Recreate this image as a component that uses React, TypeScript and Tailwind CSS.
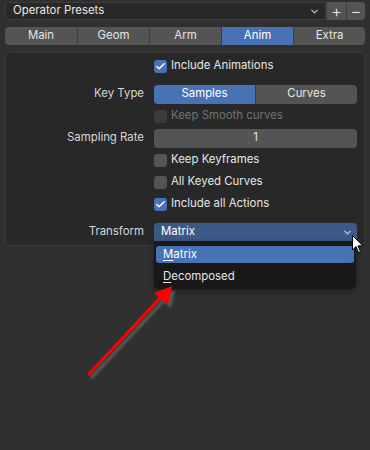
import { Check, ChevronDown } from 'lucide-react';

const font = { fontFamily: 'Inter, "Noto Sans", sans-serif' };

function CheckBox({ checked, disabled }: { checked?: boolean; disabled?: boolean }) {
  return (
    <span
      className={`flex h-[13px] w-[13px] items-center justify-center rounded-[3px] ${
        checked ? 'bg-[#4772b3]' : disabled ? 'bg-[#3a3a3a]' : 'bg-[#545454]'
      }`}
    >
      {checked && <Check size={11} strokeWidth={3.2} className="text-white" />}
    </span>
  );
}

function CheckRow({ label, checked, disabled }: { label: string; checked?: boolean; disabled?: boolean }) {
  return (
    <div className="flex h-[22px] items-center">
      <div className="w-[148px]" />
      <CheckBox checked={checked} disabled={disabled} />
      <span className={`ml-[4px] text-[11.4px] ${disabled ? 'text-[#737373]' : 'text-[#e6e6e6]'}`}>{label}</span>
    </div>
  );
}

function FieldRow({ label, children, className = '' }: { label: string; children: React.ReactNode; className?: string }) {
  return (
    <div className={`flex h-[22px] items-center ${className}`}>
      <div className="w-[138px] text-right text-[11.4px] text-[#d6d6d6]">{label}</div>
      <div className="ml-[10px] w-[203px]">{children}</div>
    </div>
  );
}

export default function App() {
  const tabs = ['Main', 'Geom', 'Arm', 'Anim', 'Extra'];

  return (
    <div className="relative h-[450px] w-[370px] overflow-hidden bg-[#303030] text-[#e6e6e6]" style={font}>
      {/* presets row */}
      <div className="mx-[5px] mt-[2px] flex h-[18px]">
        <div className="flex flex-1 items-center justify-between rounded-l-[4px] border border-[#3d3d3d] bg-[#282828] pl-[7px] pr-[5px] text-[11.4px]">
          <span>Operator Presets</span>
          <ChevronDown size={11} strokeWidth={2.2} className="text-[#cfcfcf]" />
        </div>
        <div className="flex w-[20px] items-center justify-center border-l border-[#3d3d3d] bg-[#545454] text-[17px] font-light leading-none">+</div>
        <div className="flex w-[19px] items-center justify-center rounded-r-[4px] border-l border-[#3d3d3d] bg-[#545454] text-[17px] font-light leading-none">−</div>
      </div>

      {/* tabs */}
      <div className="mx-[5px] mt-[7px] grid h-[18px] grid-cols-5 overflow-hidden rounded-[4px] text-[11.4px]">
        {tabs.map((t, i) => (
          <div
            key={t}
            className={`flex items-center justify-center ${i > 0 ? 'border-l border-[#3d3d3d]' : ''} ${
              t === 'Anim' ? 'bg-[#4772b3] text-white' : 'bg-[#545454]'
            }`}
          >
            {t}
          </div>
        ))}
      </div>

      {/* panel */}
      <div className="mx-[5px] mt-[7px] rounded-[5px] border border-[#3a3a3a] bg-[#282828] pb-[2px] pt-[2px]">
        <CheckRow label="Include Animations" checked />
        <FieldRow label="Key Type" className="mt-[6px]">
          <div className="flex h-[19px] overflow-hidden rounded-[4px] text-[11.4px]">
            <div className="flex flex-1 items-center justify-center bg-[#4772b3] text-white">Samples</div>
            <div className="flex flex-1 items-center justify-center border-l border-[#3d3d3d] bg-[#545454]">Curves</div>
          </div>
        </FieldRow>
        <CheckRow label="Keep Smooth curves" disabled />
        <FieldRow label="Sampling Rate">
          <div className="flex h-[19px] items-center justify-center rounded-[4px] bg-[#545454] text-[11.4px]">1</div>
        </FieldRow>
        <CheckRow label="Keep Keyframes" />
        <CheckRow label="All Keyed Curves" />
        <CheckRow label="Include all Actions" checked />
        <FieldRow label="Transform" className="mt-[6px]">
          <div className="flex h-[19px] items-center justify-between rounded-t-[4px] bg-[#3d5a87] pl-[7px] pr-[4px] text-[11.4px] text-white">
            <span>Matrix</span>
            <ChevronDown size={11} strokeWidth={2.2} className="text-[#d0d8e6]" />
          </div>
        </FieldRow>
      </div>

      {/* open dropdown menu */}
      <div className="absolute left-[154px] top-[241px] h-[48px] w-[202px] rounded-b-[5px] bg-[#181818] px-[2px] pt-[5px] text-[11.4px] shadow-[0_2px_6px_rgba(0,0,0,0.4)]">
        <div className="flex h-[17px] items-center rounded-[3px] bg-[#4772b3] pl-[7px] text-white">
          <span className="underline underline-offset-2">M</span>atrix
        </div>
        <div className="flex h-[28px] items-center pl-[7px] text-[#e6e6e6]">
          <span className="underline underline-offset-2">D</span>ecomposed
        </div>
      </div>

      {/* mouse cursor */}
      <svg className="absolute left-[352px] top-[235px]" width="12" height="19" viewBox="0 0 12 19">
        <path d="M0.5 0.5 L0.5 15 L4 11.5 L6.5 17.5 L8.5 16.6 L6 10.8 L11 10.8 Z" fill="#fff" stroke="#000" strokeWidth="1" strokeLinejoin="round" />
      </svg>

      {/* red annotation arrow */}
      <svg className="absolute left-0 top-0" width="370" height="450" viewBox="0 0 370 450">
        <defs>
          <filter id="sh" x="-20%" y="-20%" width="140%" height="140%">
            <feGaussianBlur stdDeviation="1.2" />
          </filter>
        </defs>
        <g filter="url(#sh)" opacity="0.7">
          <line x1="91" y1="378" x2="166" y2="298" stroke="#6a6a6a" strokeWidth="3.5" />
          <polygon points="175,290 157,296 171,308" fill="#6a6a6a" />
        </g>
        <line x1="88" y1="375" x2="163" y2="295" stroke="#ff0000" strokeWidth="3" />
        <polygon points="172,286 154,293 168,305" fill="#ff0000" />
      </svg>
    </div>
  );
}
